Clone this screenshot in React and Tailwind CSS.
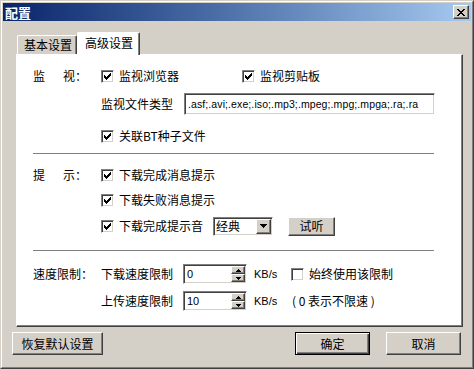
import React from 'react';

const raised =
  'bg-[#d4d0c8] border border-t-white border-l-white border-r-[#404040] border-b-[#404040] shadow-[inset_-1px_-1px_0_#808080]';
const sunken =
  'bg-white border border-t-[#808080] border-l-[#808080] border-r-white border-b-white shadow-[inset_1px_1px_0_#404040,inset_-1px_-1px_0_#d4d0c8]';

const CheckBox = ({ checked }) => (
  <span className={`inline-flex w-[13px] h-[13px] shrink-0 items-center justify-center ${sunken}`}>
    {checked && (
      <svg width="7" height="7" viewBox="0 0 7 7" shapeRendering="crispEdges">
        <path d="M6 0h1v3h-1v1h-1v1h-1v1h-1v1h-1v-1h-1v-1h-1v-3h1v1h1v1h1v-1h1v-1h1z" fill="#000" />
      </svg>
    )}
  </span>
);

const Check = ({ checked, label, className = '' }) => (
  <div className={`flex items-center ${className}`}>
    <CheckBox checked={checked} />
    <span className="ml-[5px] whitespace-nowrap">{label}</span>
  </div>
);

const Arrow = ({ up }) => (
  <svg width="5" height="3" viewBox="0 0 5 3" shapeRendering="crispEdges">
    <path d={up ? 'M2 0h1v1h1v1h1v1h-5v-1h1v-1h1z' : 'M0 0h5v1h-1v1h-1v1h-1v-1h-1v-1h-1z'} fill="#000" />
  </svg>
);

const Spinner = ({ value }) => (
  <div className={`flex w-[64px] h-[20px] ${sunken}`}>
    <span className="flex-1 pl-[3px] flex items-center font-['Liberation_Sans',sans-serif] text-[11px]">{value}</span>
    <div className="flex flex-col w-[15px] py-[1px] pr-[1px]">
      <div className={`flex-1 flex items-center justify-center ${raised}`}>
        <Arrow up />
      </div>
      <div className={`flex-1 flex items-center justify-center ${raised}`}>
        <Arrow />
      </div>
    </div>
  </div>
);

const Separator = () => <div className="w-[401px] h-[2px] border-t border-t-[#808080] border-b border-b-white" />;

export default function App() {
  return (
    <div className="w-[474px] h-[369px] bg-[#d4d0c8] border border-t-[#d4d0c8] border-l-[#d4d0c8] border-r-[#404040] border-b-[#404040] text-[12px] leading-none text-black font-['Noto_Sans_CJK_SC','Noto_Sans',sans-serif]">
      <div className="h-full flex flex-col border border-t-white border-l-white border-r-[#808080] border-b-[#808080] p-px">
        {/* title bar */}
        <div className="h-[18px] flex items-center bg-linear-to-r from-[#0a246a] to-[#a6caf0] pl-[2px] pr-[2px]">
          <span className="text-white font-bold text-[13px]">配置</span>
          <div className={`ml-auto w-[16px] h-[14px] flex items-center justify-center ${raised}`}>
            <svg width="8" height="7" viewBox="0 0 8 7" shapeRendering="crispEdges">
              <path
                d="M0 0h2v1h1v1h2v-1h1v-1h2v1h-1v1h-1v1h-1v1h1v1h1v1h1v1h-2v-1h-1v-1h-2v1h-1v1h-2v-1h1v-1h1v-1h1v-1h-1v-1h-1v-1h-1z"
                fill="#000"
              />
            </svg>
          </div>
        </div>

        {/* tabs */}
        <div className="mt-[11px] h-[22px] flex items-end pl-[14px]">
          <div className="w-[60px] h-[19px] flex items-center pl-[6px] border border-b-0 border-t-white border-l-white border-r-[#404040] rounded-t-[2px] shadow-[inset_-1px_0_0_#808080]">
            基本设置
          </div>
          <div className="relative z-10 -mb-px w-[63px] h-[23px] flex items-center pl-[7px] pb-[2px] bg-white border border-b-0 border-t-white border-l-white border-r-[#404040] rounded-t-[2px] shadow-[inset_-1px_0_0_#808080]">
            高级设置
          </div>
        </div>

        {/* panel */}
        <div className="ml-[13px] mr-[8px] h-[273px] bg-white border border-t-white border-l-white border-r-[#404040] border-b-[#404040] shadow-[inset_-1px_-1px_0_#808080] pl-4 pt-[11px]">
          <div className="h-[20px] flex items-center">
            <div className="w-[68px] flex">
              <span className="w-[30px]">监</span>
              <span>视：</span>
            </div>
            <Check checked label="监视浏览器" className="w-[141px]" />
            <Check checked label="监视剪贴板" />
          </div>

          <div className="mt-[7px] h-[22px] flex items-center pl-[68px]">
            <span className="w-[83px]">监视文件类型</span>
            <div className={`w-[251px] h-[22px] flex items-center overflow-hidden whitespace-nowrap pl-[3px] font-['Liberation_Sans',sans-serif] text-[10.5px] tracking-[0.1px] ${sunken}`}>
              .asf;.avi;.exe;.iso;.mp3;.mpeg;.mpg;.mpga;.ra;.ra
            </div>
          </div>

          <div className="mt-[11px] h-[20px] flex items-center pl-[68px]">
            <Check checked label="关联BT种子文件" />
          </div>

          <div className="mt-[7px]">
            <Separator />
          </div>

          <div className="mt-[10px] h-[20px] flex items-center">
            <div className="w-[68px] flex">
              <span className="w-[30px]">提</span>
              <span>示：</span>
            </div>
            <Check checked label="下载完成消息提示" />
          </div>

          <div className="mt-[5px] h-[20px] flex items-center pl-[68px]">
            <Check checked label="下载失败消息提示" />
          </div>

          <div className="mt-[6px] h-[20px] flex items-center pl-[68px]">
            <Check checked label="下载完成提示音" />
            <div className={`ml-[10px] w-[60px] h-[19px] flex items-center ${sunken}`}>
              <span className="flex-1 pl-[2px]">经典</span>
              <div className={`w-[15px] h-[15px] mr-[1px] flex items-center justify-center ${raised}`}>
                <svg width="7" height="4" viewBox="0 0 7 4" shapeRendering="crispEdges">
                  <path d="M0 0h7v1h-1v1h-1v1h-1v1h-1v-1h-1v-1h-1v-1h-1z" fill="#000" />
                </svg>
              </div>
            </div>
            <div className={`ml-[15px] w-[47px] h-[19px] flex items-center justify-center ${raised}`}>试听</div>
          </div>

          <div className="mt-[14px]">
            <Separator />
          </div>

          <div className="mt-[12px] h-[20px] flex items-center">
            <span className="w-[68px]">速度限制：</span>
            <span className="w-[82px]">下载速度限制</span>
            <Spinner value="0" />
            <span className="ml-[7px] w-[37px] font-['Liberation_Sans',sans-serif] text-[11px]">KB/s</span>
            <Check label="始终使用该限制" />
          </div>

          <div className="mt-[7px] h-[20px] flex items-center pl-[68px]">
            <span className="w-[82px]">上传速度限制</span>
            <Spinner value="10" />
            <span className="ml-[7px] w-[38px] font-['Liberation_Sans',sans-serif] text-[11px]">KB/s</span>
            <span className="whitespace-pre">( 0 表示不限速 )</span>
          </div>
        </div>

        {/* buttons */}
        <div className="mt-[5px] h-[23px] flex pl-[9px] pr-[10px]">
          <div className={`w-[91px] flex items-center justify-center ${raised}`}>恢复默认设置</div>
          <div className="ml-auto w-[75px] flex items-center justify-center bg-[#d4d0c8] border border-black shadow-[inset_1px_1px_0_#fff,inset_-1px_-1px_0_#404040,inset_-2px_-2px_0_#808080]">
            确定
          </div>
          <div className={`ml-[16px] w-[75px] flex items-center justify-center ${raised}`}>取消</div>
        </div>
      </div>
    </div>
  );
}
